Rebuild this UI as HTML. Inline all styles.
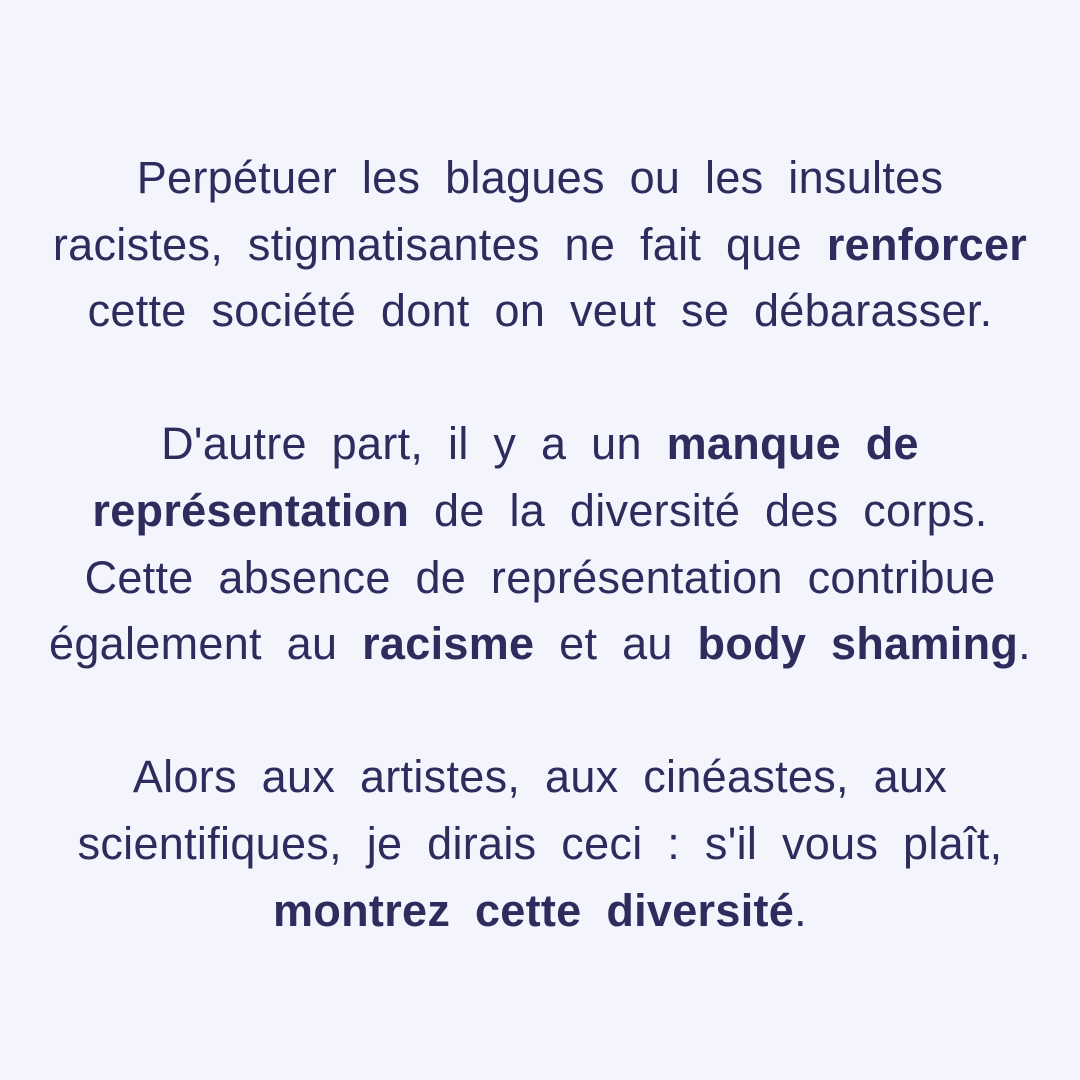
<!DOCTYPE html>
<html><head><meta charset="utf-8"><style>
html,body{margin:0;padding:0;}
body{width:1080px;height:1080px;background:#f4f4fd;overflow:hidden;}
.t{position:absolute;top:145px;left:0;width:1080px;text-align:center;font-family:"Liberation Sans",sans-serif;font-size:45px;line-height:66.6px;color:#2f2b5d;word-spacing:12px;letter-spacing:0.3px;}
b{font-weight:bold;}
</style></head><body>
<div class="t">
Perpétuer les blagues ou les insultes<br>
racistes, stigmatisantes ne fait que <b>renforcer</b><br>
cette société dont on veut se débarasser.<br>
<br>
D'autre part, il y a un <b>manque de</b><br>
<b>représentation</b> de la diversité des corps.<br>
Cette absence de représentation contribue<br>
également au <b>racisme</b> et au <b>body shaming</b>.<br>
<br>
Alors aux artistes, aux cinéastes, aux<br>
scientifiques, je dirais ceci : s'il vous plaît,<br>
<b>montrez cette diversité</b>.
</div>
</body></html>
